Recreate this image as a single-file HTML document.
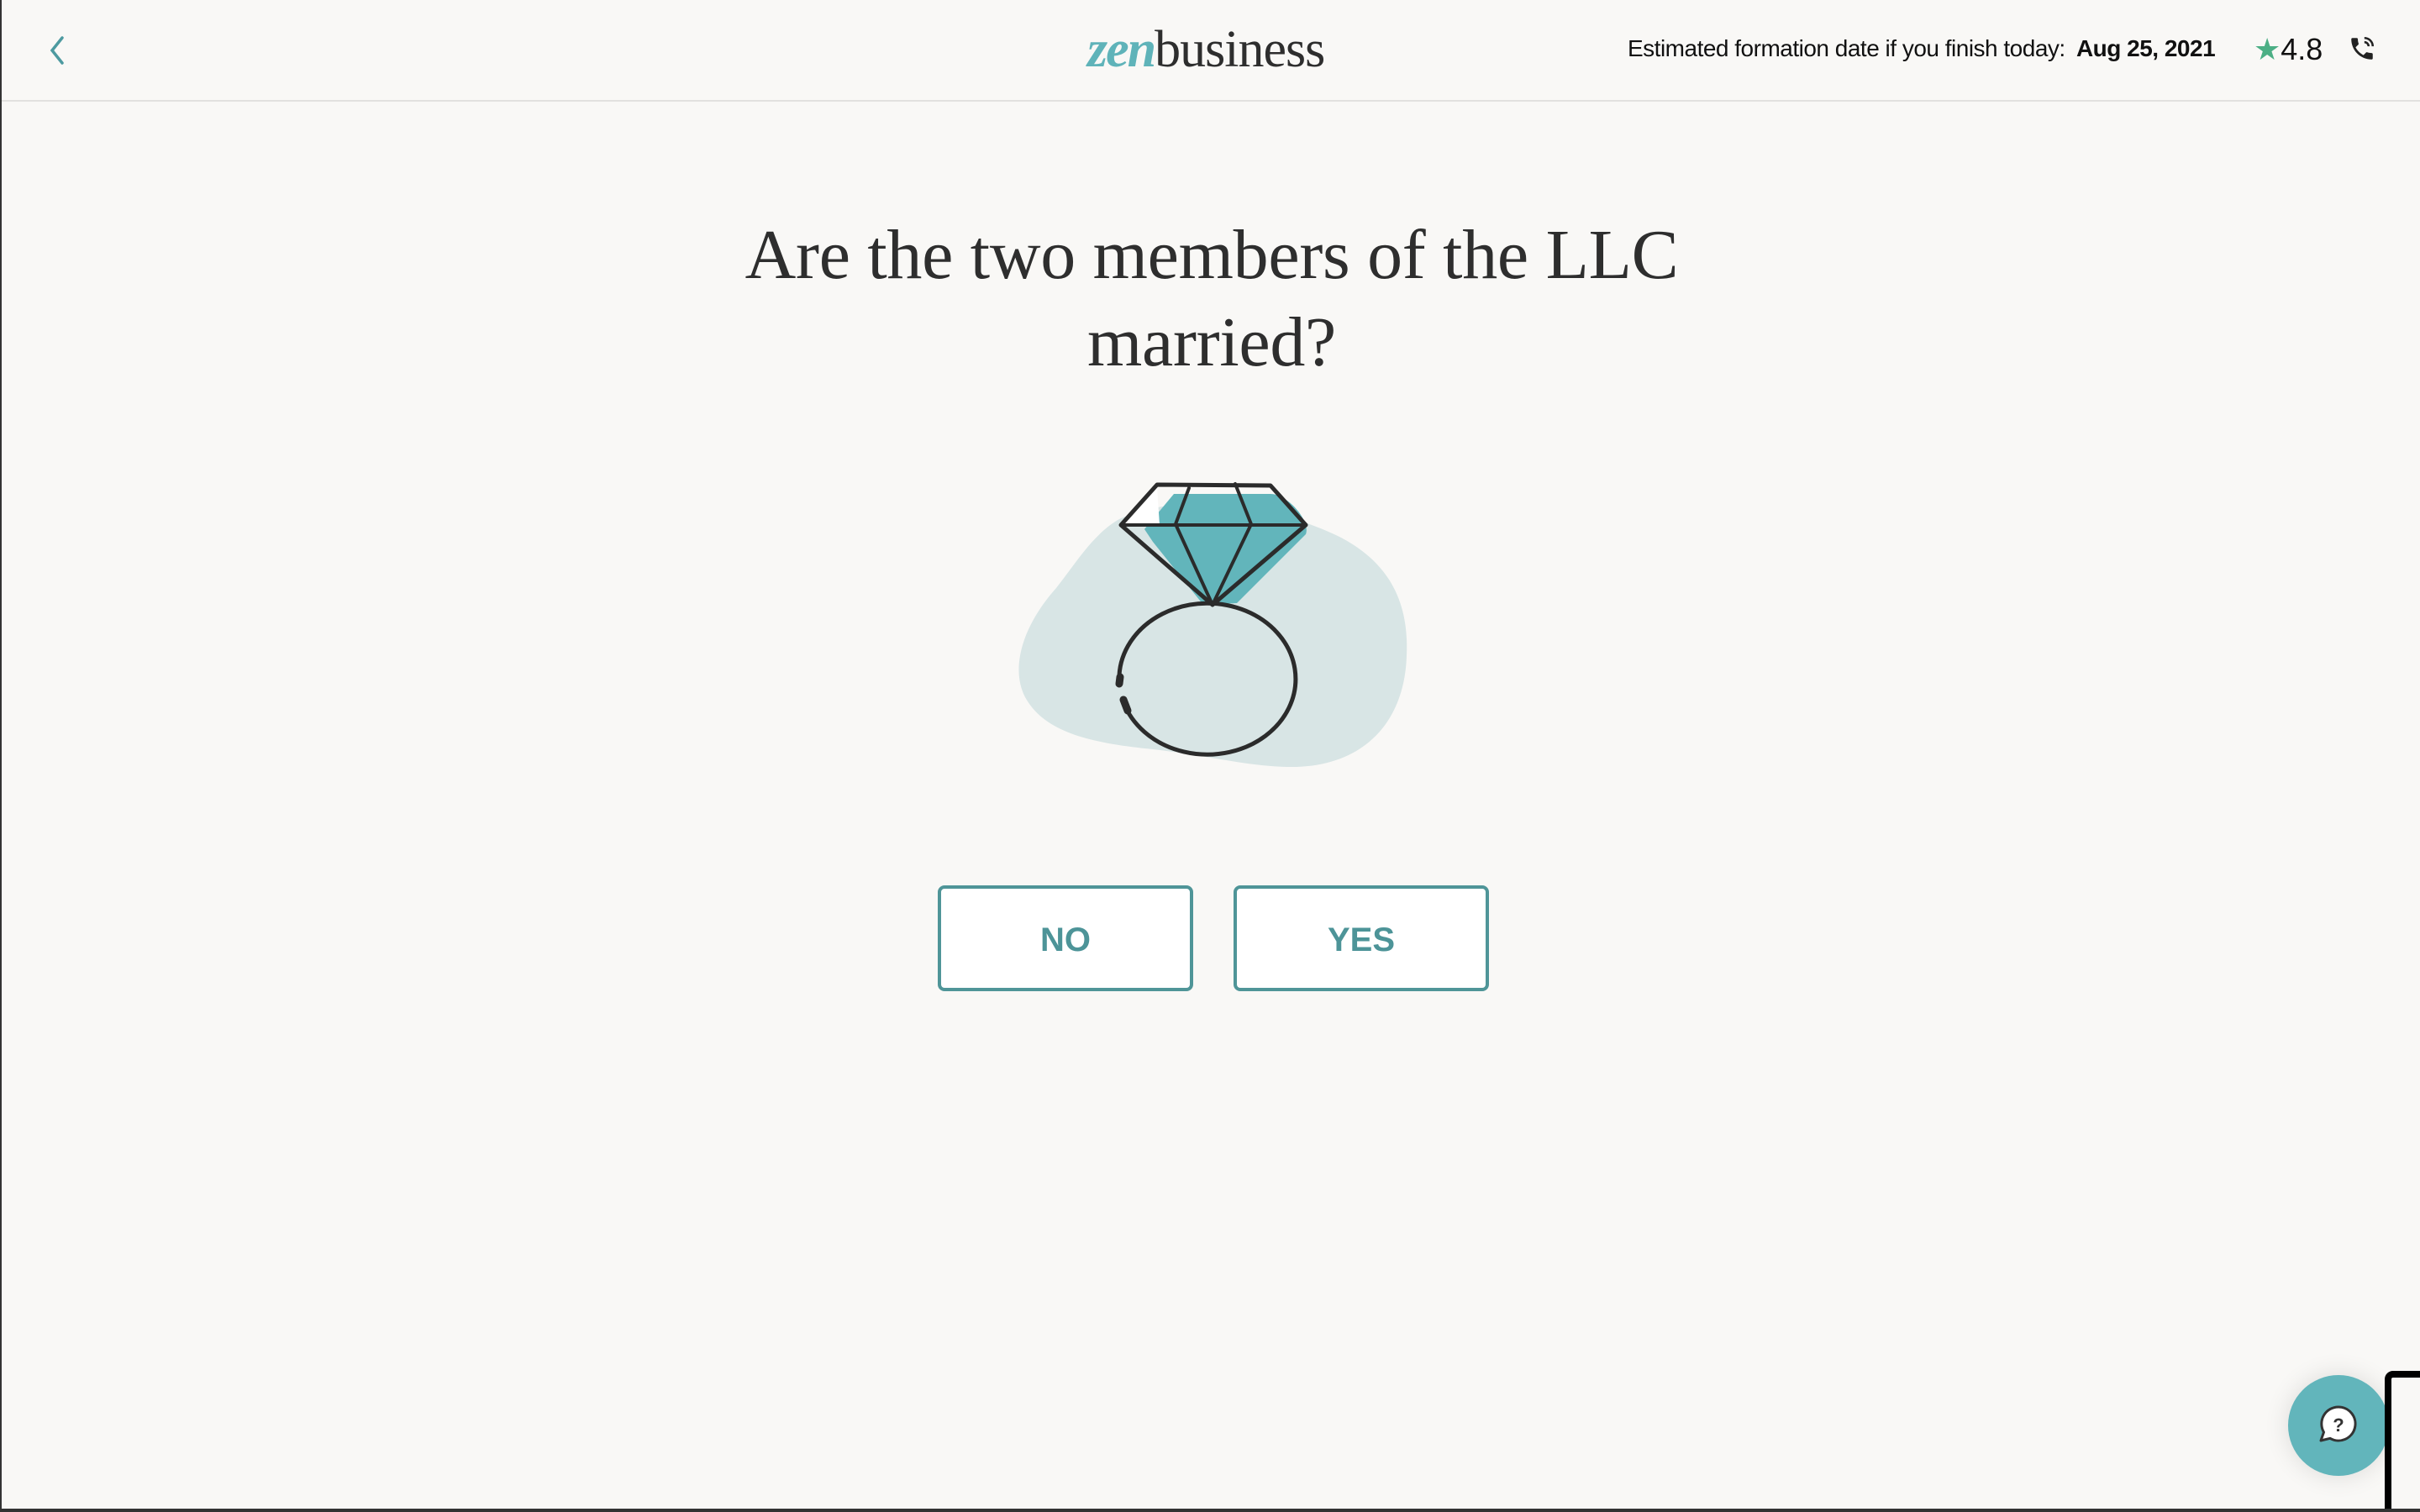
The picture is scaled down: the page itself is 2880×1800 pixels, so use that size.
<!DOCTYPE html>
<html><head><meta charset="utf-8"><style>
*{margin:0;padding:0;box-sizing:border-box}
html,body{width:2880px;height:1800px;overflow:hidden;background:#f9f8f6}
body{position:relative;font-family:"Liberation Sans",sans-serif;border-left:2px solid #333;}
.hdr{position:absolute;left:0;top:0;width:2880px;height:121px;border-bottom:2px solid #e2e1df}
.logo{position:absolute;left:1292px;top:24px;font-family:"Liberation Serif",serif;font-size:62px;color:#2e2e2e;letter-spacing:-1px}
.logo i{color:#5fb3b9;font-weight:bold;letter-spacing:-2px}
.est{position:absolute;left:1935px;top:42px;font-size:28px;color:#111;letter-spacing:-0.5px;white-space:nowrap}
.est b{margin-left:6px}
.rate{position:absolute;left:2680px;top:38px;font-size:36px;color:#111;white-space:nowrap}
.rate span{color:#4caf85}
h1{position:absolute;left:0;width:2880px;top:252px;text-align:center;font-family:"Liberation Serif",serif;font-weight:normal;font-size:84px;line-height:104px;color:#2e2e2e;letter-spacing:-0.3px}
.btn{position:absolute;top:1054px;width:304px;height:126px;border:4px solid #4f9598;border-radius:8px;background:#fff;color:#4d9498;font-size:40px;font-weight:bold;text-align:center;line-height:122px}
.chat{position:absolute;left:2721px;top:1637px;width:120px;height:120px;border-radius:50%;background:#62b5bb;box-shadow:0 0 30px rgba(0,0,0,.12)}
.frame{position:absolute;left:2836px;top:1632px;width:60px;height:200px;border:8px solid #000;border-radius:10px;background:#f9f8f6}
.bot{position:absolute;left:0;top:1796px;width:2880px;height:4px;background:#333}
</style></head><body>
<div class="hdr">
<svg style="position:absolute;left:56px;top:42px" width="20" height="36" viewBox="0 0 20 36"><path d="M16 3 L4 18 L16 33" fill="none" stroke="#4d9aa0" stroke-width="3.5" stroke-linecap="round"/></svg>
<div class="logo"><i>zen</i>business</div>
<div class="est">Estimated formation date if you finish today: <b>Aug 25, 2021</b></div>
<div class="rate"><span>★</span>4.8</div>
<svg style="position:absolute;left:2792px;top:40px" width="34" height="36" viewBox="0 0 24 24"><path d="M6.6 10.8c1.4 2.8 3.8 5.1 6.6 6.6l2.2-2.2c.3-.3.7-.4 1-.2 1.1.4 2.3.6 3.6.6.6 0 1 .4 1 1V20c0 .6-.4 1-1 1C10.6 21 3 13.4 3 4c0-.6.4-1 1-1h3.5c.6 0 1 .4 1 1 0 1.3.2 2.5.6 3.6.1.3 0 .7-.2 1z" fill="#222"/><path d="M14 3a7 7 0 0 1 7 7M14 6.5a3.5 3.5 0 0 1 3.5 3.5" stroke="#222" stroke-width="1.8" fill="none"/></svg>
</div>
<h1>Are the two members of the LLC<br>married?</h1>
<svg style="position:absolute;left:1180px;top:540px" width="520" height="400" viewBox="0 0 520 400">
<path d="M150 78 C220 45 330 60 410 98 C470 128 495 175 492 240 C490 320 440 375 350 373 C300 372 260 360 190 352 C110 344 60 330 38 290 C20 255 35 205 75 160 C100 128 120 95 150 78Z" fill="#d8e5e5"/>
<path d="M215 48 L330 48 C350 48 378 80 372 96 L290 178 L250 180 L190 105 L180 90 Z" fill="#62b5bb"/>
<path d="M195 40 L152 85 L198 85 Z" fill="#fff"/>
<g fill="none" stroke="#2b2b2b" stroke-linecap="round" stroke-linejoin="round">
<path d="M195 37 L330 38 L372 85 L261 180 L152 85 Z" stroke-width="5"/>
<path d="M152 85 L372 85" stroke-width="4"/>
<path d="M233 41 L217 84 L261 180 L307 84 L288 36" stroke-width="4"/>
<path d="M150 264 A105 90 0 1 1 155 296" stroke-width="5"/>
<path d="M151 266 L150 274" stroke-width="9"/>
<path d="M155 293 L160 306" stroke-width="9"/>
</g>
</svg>
<div class="btn" style="left:1114px">NO</div>
<div class="btn" style="left:1466px">YES</div>
<div class="chat"><svg style="position:absolute;left:34px;top:34px" width="52" height="52" viewBox="0 0 52 52"><path d="M26 4a20 20 0 1 1-10 37.3L5 44l3.5-10A20 20 0 0 1 26 4z" fill="#fff" stroke="#333" stroke-width="3" stroke-linejoin="round"/><text x="26" y="33" text-anchor="middle" font-family="Liberation Sans" font-weight="bold" font-size="22" fill="#333">?</text></svg></div>
<div class="frame"></div>
<div class="bot"></div>
</body></html>
